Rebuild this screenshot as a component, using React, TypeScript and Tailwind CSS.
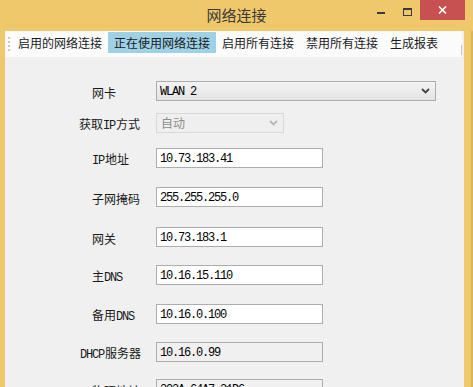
import React from "react";

const CJK = { fontFamily: '"Noto Sans CJK SC", "Noto Sans", sans-serif' };
const MONO = { fontFamily: '"Liberation Mono", "Noto Sans CJK SC", monospace' };

function Lbl({ text }: { text: string }) {
  const parts = text.split(/([A-Za-z]+)/).filter((p) => p.length > 0);
  return (
    <span className="text-[12px] leading-[16px] text-[#1a1a1a] whitespace-nowrap" style={CJK}>
      {parts.map((p, i) =>
        /^[A-Za-z]+$/.test(p) ? (
          <span key={i} className="tracking-[-1.2px] mr-[1px]" style={MONO}>
            {p}
          </span>
        ) : (
          <span key={i}>{p}</span>
        )
      )}
    </span>
  );
}

function Chevron({ color }: { color: string }) {
  return (
    <svg width="9" height="6" viewBox="0 0 9 6">
      <path d="M1 1 L4.5 4.5 L8 1" fill="none" stroke={color} strokeWidth="1.8" />
    </svg>
  );
}

function Row({
  label,
  pl,
  mt,
  children,
}: {
  label: string;
  pl: string;
  mt: string;
  children: React.ReactNode;
}) {
  return (
    <div className={`flex items-center h-[20px] ${mt}`}>
      <div className={`w-[151px] shrink-0 flex items-center pt-[3px] ${pl}`}>
        <Lbl text={label} />
      </div>
      {children}
    </div>
  );
}

function TextBox({ value, readOnly }: { value: string; readOnly?: boolean }) {
  return (
    <div
      className={`w-[167px] h-[20px] border border-[#abadb3] flex items-center pl-[3px] overflow-hidden ${
        readOnly ? "bg-[#f0f0f0]" : "bg-white"
      }`}
    >
      <span
        className="text-[12px] leading-[14px] text-black tracking-[-1.2px] whitespace-nowrap pt-[1px]"
        style={MONO}
      >
        {value}
      </span>
    </div>
  );
}

export default function App() {
  const tabs = ["启用的网络连接", "正在使用网络连接", "启用所有连接", "禁用所有连接", "生成报表"];
  return (
    <div className="w-[473px] h-[387px] overflow-hidden bg-[#f0c86c] flex flex-col">
      {/* title bar */}
      <div className="h-[31px] shrink-0 relative flex items-center justify-center">
        <span className="text-[15px] leading-[20px] text-[#3a3a3a] mb-[1px]" style={CJK}>
          网络连接
        </span>
        <div className="absolute top-0 right-[8px] flex items-start h-[20px]">
          <div className="w-[26px] h-[20px] flex items-start justify-center pt-[12px]">
            <div className="w-[8px] h-[2px] bg-[#3a3a3a]" />
          </div>
          <div className="w-[26px] h-[20px] flex items-start justify-center pt-[8px]">
            <div className="w-[9px] h-[8px] border border-[#3a3a3a] border-t-2" />
          </div>
          <div className="w-[45px] h-[20px] bg-[#c75050] flex items-center justify-center">
            <svg width="9" height="8" viewBox="0 0 9 8">
              <path d="M1 0.5 L8 7.5 M8 0.5 L1 7.5" stroke="white" strokeWidth="1.6" />
            </svg>
          </div>
        </div>
      </div>
      {/* body */}
      <div className="flex-1 flex min-h-0">
        <div className="w-[5px] shrink-0 bg-[#f0c86c]" />
        <div className="flex-1 bg-[#f0f0f0] flex flex-col min-w-0">
          {/* toolbar */}
          <div className="h-[26px] shrink-0 bg-[#fbfbfb] flex items-start pt-[1px] relative mr-[2px]">
            <div className="w-[7px] h-[24px] shrink-0 flex flex-col items-center gap-[2px] pt-[5px]">
              {[0, 1, 2, 3].map((i) => (
                <div key={i} className="w-[2px] h-[2px] bg-[#c8c8c8]" />
              ))}
            </div>
            {tabs.map((t, i) => (
              <div
                key={t}
                className={`h-[21px] px-[6px] flex items-center ${i === 1 ? "bg-[#9ed1e6]" : ""}`}
              >
                <span className="text-[12px] leading-[16px] text-[#1a1a1a]" style={CJK}>
                  {t}
                </span>
              </div>
            ))}
            <div className="absolute right-0 top-[14px] w-[1px] h-[10px] bg-[#c8c8c8]" />
          </div>
          {/* form */}
          <div className="flex flex-col">
            <Row label="网卡" pl="pl-[87px]" mt="mt-[24px]">
              <div className="w-[280px] h-[20px] border border-[#acacac] bg-gradient-to-b from-[#f3f3f3] to-[#e4e4e4] flex items-center justify-between pl-[3px] pr-[5px]">
                <span className="text-[12px] leading-[14px] tracking-[-1.2px] text-black pt-[1px]" style={MONO}>
                  WLAN 2
                </span>
                <Chevron color="#444" />
              </div>
            </Row>
            <Row label="获取IP方式" pl="pl-[74px]" mt="mt-[12px]">
              <div className="w-[128px] h-[20px] border border-[#d9d9d9] bg-[#efefef] flex items-center justify-between pl-[4px] pr-[5px]">
                <span className="text-[12px] leading-[16px] text-[#8d8d8d]" style={CJK}>
                  自动
                </span>
                <Chevron color="#b8b8b8" />
              </div>
            </Row>
            <Row label="IP地址" pl="pl-[87px]" mt="mt-[15px]">
              <TextBox value="10.73.183.41" />
            </Row>
            <Row label="子网掩码" pl="pl-[87px]" mt="mt-[19px]">
              <TextBox value="255.255.255.0" />
            </Row>
            <Row label="网关" pl="pl-[87px]" mt="mt-[20px]">
              <TextBox value="10.73.183.1" />
            </Row>
            <Row label="主DNS" pl="pl-[87px]" mt="mt-[18px]">
              <TextBox value="10.16.15.110" />
            </Row>
            <Row label="备用DNS" pl="pl-[87px]" mt="mt-[19px]">
              <TextBox value="10.16.0.100" />
            </Row>
            <Row label="DHCP服务器" pl="pl-[75px]" mt="mt-[18px]">
              <TextBox value="10.16.0.99" readOnly />
            </Row>
            <Row label="物理地址" pl="pl-[87px]" mt="mt-[17px]">
              <TextBox value="303A-64A7-31D6" readOnly />
            </Row>
          </div>
        </div>
        <div className="w-[7px] shrink-0 bg-[#f0c86c]" />
        <div className="w-[2px] shrink-0 bg-[#d8b460]" />
      </div>
    </div>
  );
}
